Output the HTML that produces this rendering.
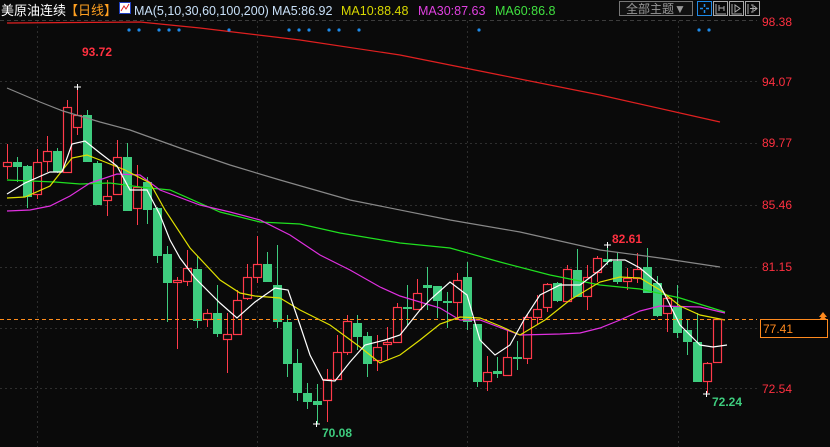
<!DOCTYPE html>
<html><head><meta charset="utf-8"><style>
body{margin:0;background:#0a0a0a;width:830px;height:447px;overflow:hidden;font-family:"Liberation Sans","Noto Sans CJK SC",sans-serif}
svg{position:absolute;left:0;top:0}
</style></head><body>
<svg id="s" width="830" height="447" xmlns="http://www.w3.org/2000/svg">
<g stroke="#2e2e2e" stroke-dasharray="2,3" stroke-width="1">
<line x1="0" y1="20.5" x2="757" y2="20.5" stroke="#3c3c3c" stroke-dasharray="4,3"/>
<line x1="0" y1="81.5" x2="757" y2="81.5"/><line x1="0" y1="143.5" x2="757" y2="143.5"/>
<line x1="0" y1="205.5" x2="757" y2="205.5"/><line x1="0" y1="267.5" x2="757" y2="267.5"/>
<line x1="0" y1="328.5" x2="757" y2="328.5"/><line x1="0" y1="388.5" x2="757" y2="388.5"/>
<line x1="37.5" y1="21" x2="37.5" y2="447"/><line x1="257.5" y1="21" x2="257.5" y2="447"/>
<line x1="467.5" y1="21" x2="467.5" y2="447"/><line x1="678.5" y1="21" x2="678.5" y2="447"/>
</g>
<g id="c"><line x1="7.5" y1="144" x2="7.5" y2="179" stroke="#ff3a4a"/><rect x="3.5" y="162.5" width="8" height="4" fill="#0a0a0a" stroke="#ff3a4a" stroke-width="1.2"/><line x1="17.5" y1="157" x2="17.5" y2="182" stroke="#3ecc7e"/><rect x="13" y="162" width="9" height="5" fill="#3ecc7e"/><line x1="27.5" y1="165" x2="27.5" y2="208" stroke="#3ecc7e"/><rect x="23" y="166" width="9" height="31" fill="#3ecc7e"/><line x1="37.5" y1="149" x2="37.5" y2="199" stroke="#ff3a4a"/><rect x="33.5" y="162.5" width="8" height="32" fill="#0a0a0a" stroke="#ff3a4a" stroke-width="1.2"/><line x1="47.5" y1="136" x2="47.5" y2="172" stroke="#ff3a4a"/><rect x="43.5" y="151.5" width="8" height="10" fill="#0a0a0a" stroke="#ff3a4a" stroke-width="1.2"/><line x1="57.5" y1="148" x2="57.5" y2="173" stroke="#3ecc7e"/><rect x="53" y="151" width="9" height="21" fill="#3ecc7e"/><line x1="67.5" y1="100" x2="67.5" y2="172" stroke="#ff3a4a"/><rect x="63.5" y="107.5" width="8" height="65" fill="#0a0a0a" stroke="#ff3a4a" stroke-width="1.2"/><line x1="77.5" y1="87" x2="77.5" y2="135" stroke="#ff3a4a"/><rect x="73.5" y="115.5" width="8" height="12" fill="#0a0a0a" stroke="#ff3a4a" stroke-width="1.2"/><line x1="87.5" y1="110" x2="87.5" y2="162" stroke="#3ecc7e"/><rect x="83" y="115" width="9" height="47" fill="#3ecc7e"/><line x1="97.5" y1="161" x2="97.5" y2="205" stroke="#3ecc7e"/><rect x="93" y="163" width="9" height="42" fill="#3ecc7e"/><line x1="107.5" y1="180" x2="107.5" y2="216" stroke="#ff3a4a"/><rect x="103.5" y="196.5" width="8" height="4" fill="#0a0a0a" stroke="#ff3a4a" stroke-width="1.2"/><line x1="117.5" y1="140" x2="117.5" y2="194" stroke="#ff3a4a"/><rect x="113.5" y="157.5" width="8" height="37" fill="#0a0a0a" stroke="#ff3a4a" stroke-width="1.2"/><line x1="127.5" y1="143" x2="127.5" y2="210" stroke="#3ecc7e"/><rect x="123" y="157" width="9" height="54" fill="#3ecc7e"/><line x1="137.5" y1="165" x2="137.5" y2="225" stroke="#ff3a4a"/><rect x="133.5" y="187.5" width="8" height="21" fill="#0a0a0a" stroke="#ff3a4a" stroke-width="1.2"/><line x1="147.5" y1="177" x2="147.5" y2="224" stroke="#3ecc7e"/><rect x="143" y="182" width="9" height="28" fill="#3ecc7e"/><line x1="157.5" y1="207" x2="157.5" y2="263" stroke="#3ecc7e"/><rect x="153" y="208" width="9" height="48" fill="#3ecc7e"/><line x1="167.5" y1="246" x2="167.5" y2="322" stroke="#3ecc7e"/><rect x="163" y="254" width="9" height="29" fill="#3ecc7e"/><line x1="177.5" y1="277" x2="177.5" y2="349" stroke="#ff3a4a"/><rect x="173.5" y="280.5" width="8" height="2" fill="#0a0a0a" stroke="#ff3a4a" stroke-width="1.2"/><line x1="187.5" y1="250" x2="187.5" y2="286" stroke="#ff3a4a"/><rect x="183.5" y="268.5" width="8" height="13" fill="#0a0a0a" stroke="#ff3a4a" stroke-width="1.2"/><line x1="197.5" y1="256" x2="197.5" y2="328" stroke="#3ecc7e"/><rect x="193" y="269" width="9" height="52" fill="#3ecc7e"/><line x1="207.5" y1="309" x2="207.5" y2="327" stroke="#ff3a4a"/><rect x="203.5" y="313.5" width="8" height="6" fill="#0a0a0a" stroke="#ff3a4a" stroke-width="1.2"/><line x1="217.5" y1="285" x2="217.5" y2="337" stroke="#3ecc7e"/><rect x="213" y="313" width="9" height="21" fill="#3ecc7e"/><line x1="227.5" y1="313" x2="227.5" y2="373" stroke="#ff3a4a"/><rect x="223.5" y="334.5" width="8" height="5" fill="#0a0a0a" stroke="#ff3a4a" stroke-width="1.2"/><line x1="237.5" y1="290" x2="237.5" y2="335" stroke="#ff3a4a"/><rect x="233.5" y="300.5" width="8" height="34" fill="#0a0a0a" stroke="#ff3a4a" stroke-width="1.2"/><line x1="247.5" y1="264" x2="247.5" y2="300" stroke="#ff3a4a"/><rect x="243.5" y="277.5" width="8" height="21" fill="#0a0a0a" stroke="#ff3a4a" stroke-width="1.2"/><line x1="257.5" y1="236" x2="257.5" y2="283" stroke="#ff3a4a"/><rect x="253.5" y="264.5" width="8" height="13" fill="#0a0a0a" stroke="#ff3a4a" stroke-width="1.2"/><line x1="267.5" y1="252" x2="267.5" y2="282" stroke="#3ecc7e"/><rect x="263" y="264" width="9" height="18" fill="#3ecc7e"/><line x1="277.5" y1="245" x2="277.5" y2="328" stroke="#3ecc7e"/><rect x="273" y="285" width="9" height="37" fill="#3ecc7e"/><line x1="287.5" y1="315" x2="287.5" y2="377" stroke="#3ecc7e"/><rect x="283" y="322" width="9" height="42" fill="#3ecc7e"/><line x1="297.5" y1="349" x2="297.5" y2="401" stroke="#3ecc7e"/><rect x="293" y="363" width="9" height="30" fill="#3ecc7e"/><line x1="307.5" y1="383" x2="307.5" y2="409" stroke="#3ecc7e"/><rect x="303" y="393" width="9" height="9" fill="#3ecc7e"/><line x1="317.5" y1="384" x2="317.5" y2="424" stroke="#3ecc7e"/><rect x="313" y="401" width="9" height="4" fill="#3ecc7e"/><line x1="327.5" y1="369" x2="327.5" y2="422" stroke="#ff3a4a"/><rect x="323.5" y="379.5" width="8" height="21" fill="#0a0a0a" stroke="#ff3a4a" stroke-width="1.2"/><line x1="337.5" y1="335" x2="337.5" y2="379" stroke="#ff3a4a"/><rect x="333.5" y="352.5" width="8" height="27" fill="#0a0a0a" stroke="#ff3a4a" stroke-width="1.2"/><line x1="347.5" y1="315" x2="347.5" y2="355" stroke="#ff3a4a"/><rect x="343.5" y="321.5" width="8" height="31" fill="#0a0a0a" stroke="#ff3a4a" stroke-width="1.2"/><line x1="357.5" y1="315" x2="357.5" y2="350" stroke="#3ecc7e"/><rect x="353" y="323" width="9" height="14" fill="#3ecc7e"/><line x1="367.5" y1="332" x2="367.5" y2="377" stroke="#3ecc7e"/><rect x="363" y="336" width="9" height="28" fill="#3ecc7e"/><line x1="377.5" y1="335" x2="377.5" y2="371" stroke="#ff3a4a"/><rect x="373.5" y="347.5" width="8" height="13" fill="#0a0a0a" stroke="#ff3a4a" stroke-width="1.2"/><line x1="387.5" y1="327" x2="387.5" y2="360" stroke="#ff3a4a"/><rect x="383.5" y="342.5" width="8" height="2" fill="#0a0a0a" stroke="#ff3a4a" stroke-width="1.2"/><line x1="397.5" y1="303" x2="397.5" y2="342" stroke="#ff3a4a"/><rect x="393.5" y="307.5" width="8" height="35" fill="#0a0a0a" stroke="#ff3a4a" stroke-width="1.2"/><line x1="407.5" y1="285" x2="407.5" y2="325" stroke="#3ecc7e"/><rect x="403" y="307" width="9" height="2" fill="#3ecc7e"/><line x1="417.5" y1="279" x2="417.5" y2="310" stroke="#ff3a4a"/><rect x="413.5" y="293.5" width="8" height="16" fill="#0a0a0a" stroke="#ff3a4a" stroke-width="1.2"/><line x1="427.5" y1="267" x2="427.5" y2="310" stroke="#3ecc7e"/><rect x="423" y="285" width="9" height="3" fill="#3ecc7e"/><line x1="437.5" y1="286" x2="437.5" y2="318" stroke="#3ecc7e"/><rect x="433" y="286" width="9" height="15" fill="#3ecc7e"/><line x1="447.5" y1="292" x2="447.5" y2="328" stroke="#3ecc7e"/><rect x="443" y="301" width="9" height="2" fill="#3ecc7e"/><line x1="457.5" y1="273" x2="457.5" y2="320" stroke="#ff3a4a"/><rect x="453.5" y="280.5" width="8" height="22" fill="#0a0a0a" stroke="#ff3a4a" stroke-width="1.2"/><line x1="467.5" y1="262" x2="467.5" y2="330" stroke="#3ecc7e"/><rect x="463" y="277" width="9" height="45" fill="#3ecc7e"/><line x1="477.5" y1="324" x2="477.5" y2="387" stroke="#3ecc7e"/><rect x="473" y="324" width="9" height="58" fill="#3ecc7e"/><line x1="487.5" y1="356" x2="487.5" y2="391" stroke="#ff3a4a"/><rect x="483.5" y="372.5" width="8" height="9" fill="#0a0a0a" stroke="#ff3a4a" stroke-width="1.2"/><line x1="497.5" y1="357" x2="497.5" y2="378" stroke="#3ecc7e"/><rect x="493" y="371" width="9" height="3" fill="#3ecc7e"/><line x1="507.5" y1="330" x2="507.5" y2="375" stroke="#ff3a4a"/><rect x="503.5" y="357.5" width="8" height="18" fill="#0a0a0a" stroke="#ff3a4a" stroke-width="1.2"/><line x1="517.5" y1="341" x2="517.5" y2="370" stroke="#3ecc7e"/><rect x="513" y="357" width="9" height="2" fill="#3ecc7e"/><line x1="527.5" y1="314" x2="527.5" y2="364" stroke="#ff3a4a"/><rect x="523.5" y="317.5" width="8" height="41" fill="#0a0a0a" stroke="#ff3a4a" stroke-width="1.2"/><line x1="537.5" y1="295" x2="537.5" y2="324" stroke="#ff3a4a"/><rect x="533.5" y="309.5" width="8" height="8" fill="#0a0a0a" stroke="#ff3a4a" stroke-width="1.2"/><line x1="547.5" y1="283" x2="547.5" y2="312" stroke="#ff3a4a"/><rect x="543.5" y="284.5" width="8" height="23" fill="#0a0a0a" stroke="#ff3a4a" stroke-width="1.2"/><line x1="557.5" y1="282" x2="557.5" y2="302" stroke="#3ecc7e"/><rect x="553" y="283" width="9" height="18" fill="#3ecc7e"/><line x1="567.5" y1="265" x2="567.5" y2="302" stroke="#ff3a4a"/><rect x="563.5" y="269.5" width="8" height="32" fill="#0a0a0a" stroke="#ff3a4a" stroke-width="1.2"/><line x1="577.5" y1="249" x2="577.5" y2="296" stroke="#3ecc7e"/><rect x="573" y="270" width="9" height="27" fill="#3ecc7e"/><line x1="587.5" y1="265" x2="587.5" y2="310" stroke="#ff3a4a"/><rect x="583.5" y="277.5" width="8" height="19" fill="#0a0a0a" stroke="#ff3a4a" stroke-width="1.2"/><line x1="597.5" y1="256" x2="597.5" y2="282" stroke="#ff3a4a"/><rect x="593.5" y="258.5" width="8" height="14" fill="#0a0a0a" stroke="#ff3a4a" stroke-width="1.2"/><line x1="607.5" y1="245" x2="607.5" y2="265" stroke="#3ecc7e"/><rect x="603" y="259" width="9" height="3" fill="#3ecc7e"/><line x1="617.5" y1="252" x2="617.5" y2="284" stroke="#3ecc7e"/><rect x="613" y="261" width="9" height="21" fill="#3ecc7e"/><line x1="627.5" y1="268" x2="627.5" y2="290" stroke="#ff3a4a"/><rect x="623.5" y="278.5" width="8" height="3" fill="#0a0a0a" stroke="#ff3a4a" stroke-width="1.2"/><line x1="637.5" y1="253" x2="637.5" y2="283" stroke="#ff3a4a"/><rect x="633.5" y="269.5" width="8" height="9" fill="#0a0a0a" stroke="#ff3a4a" stroke-width="1.2"/><line x1="647.5" y1="248" x2="647.5" y2="292" stroke="#3ecc7e"/><rect x="643" y="267" width="9" height="26" fill="#3ecc7e"/><line x1="657.5" y1="276" x2="657.5" y2="317" stroke="#3ecc7e"/><rect x="653" y="283" width="9" height="33" fill="#3ecc7e"/><line x1="667.5" y1="295" x2="667.5" y2="332" stroke="#ff3a4a"/><rect x="663.5" y="298.5" width="8" height="15" fill="#0a0a0a" stroke="#ff3a4a" stroke-width="1.2"/><line x1="677.5" y1="285" x2="677.5" y2="338" stroke="#3ecc7e"/><rect x="673" y="306" width="9" height="27" fill="#3ecc7e"/><line x1="687.5" y1="320" x2="687.5" y2="355" stroke="#3ecc7e"/><rect x="683" y="330" width="9" height="12" fill="#3ecc7e"/><line x1="697.5" y1="313" x2="697.5" y2="381" stroke="#3ecc7e"/><rect x="693" y="342" width="9" height="40" fill="#3ecc7e"/><line x1="707.5" y1="362" x2="707.5" y2="393" stroke="#ff3a4a"/><rect x="703.5" y="363.5" width="8" height="18" fill="#0a0a0a" stroke="#ff3a4a" stroke-width="1.2"/><line x1="717.5" y1="318" x2="717.5" y2="363" stroke="#ff3a4a"/><rect x="713.5" y="319.5" width="8" height="43" fill="#0a0a0a" stroke="#ff3a4a" stroke-width="1.2"/></g>
<g fill="none" stroke-width="1.2">
<polyline stroke="#e02020" points="7,23 140,22 200,28 300,40 400,55 500,75 600,95 720,122"/>
<polyline stroke="#888" points="7,88 40,102 63,111 100,122 130,130 180,148 230,165 280,180 350,200 450,220 520,232 600,250 660,258 720,267"/>
<polyline stroke="#20e020" points="7,180 55,182 80,184 110,183 140,187 170,190 220,212 260,222 300,224 340,233 400,243 450,248 500,262 550,275 600,285 640,289 680,298 725,312"/>
<polyline stroke="#e030e0" points="7,211 30,210 50,206 70,196 90,183 117,174 140,175 160,190 200,205 230,212 260,220 290,235 320,255 350,270 380,287 400,296 440,308 460,320 480,320 520,335 560,334 580,333 600,328 620,320 640,311 660,306 700,307 725,313"/>
<polyline stroke="#e0e000" points="7,198 25,197 50,186 72,158 87,155 105,162 125,170 150,183 165,210 190,248 220,280 240,293 255,296 280,298 300,310 330,325 360,347 380,363 400,355 420,340 440,324 460,317 480,318 500,326 520,335 545,320 570,300 600,282 620,277 640,278 660,290 680,306 700,315 725,320"/>
<polyline stroke="#fff" points="7,194 25,183 50,172 62,172 72,144 85,141 100,153 117,166 130,190 147,190 160,215 170,240 180,258 195,278 220,303 237,318 255,302 275,288 288,290 300,325 310,355 323,380 335,381 350,362 365,345 385,340 400,335 420,310 432,298 450,282 467,295 480,340 495,355 510,345 525,318 540,295 560,285 580,285 600,270 610,260 625,260 640,268 660,285 680,325 700,345 713,347 727,345"/>
</g>
<line x1="0" y1="319.5" x2="757" y2="319.5" stroke="#ff8c1a" stroke-width="1" stroke-dasharray="4,3"/>
<g fill="#1e8ae8">
<circle cx="129" cy="30" r="1.6"/><circle cx="139" cy="30" r="1.6"/><circle cx="159" cy="30" r="1.6"/><circle cx="169" cy="30" r="1.6"/><circle cx="179" cy="30" r="1.6"/><circle cx="229" cy="30" r="1.6"/><circle cx="289" cy="30" r="1.6"/><circle cx="299" cy="30" r="1.6"/><circle cx="309" cy="30" r="1.6"/><circle cx="329" cy="30" r="1.6"/><circle cx="339" cy="30" r="1.6"/><circle cx="359" cy="30" r="1.6"/><circle cx="479" cy="30" r="1.6"/><circle cx="699" cy="30" r="1.6"/><circle cx="709" cy="30" r="1.6"/>
</g>
<g font-size="12" fill="#ff3040">
<text x="762" y="26">98.38</text><text x="762" y="86">94.07</text><text x="762" y="147">89.77</text>
<text x="762" y="209">85.46</text><text x="762" y="271">81.15</text><text x="762" y="393">72.54</text>
</g>
<rect x="760.5" y="319.5" width="67" height="18" fill="#000" stroke="#ff8a1e"/>
<text x="763" y="333" font-size="12" fill="#ff8a1e">77.41</text>
<path d="M819 320 L823 315 L827 320 Z M819 317 L823 312 L827 317 Z" fill="#ff8a1e"/>
<g font-size="12" font-weight="bold">
<text x="82" y="56" fill="#ff3040">93.72</text><text x="612" y="243" fill="#ff3040">82.61</text>
<text x="322" y="437" fill="#3ecc7e">70.08</text><text x="712" y="406" fill="#3ecc7e">72.24</text>
</g>
<g stroke="#fff" stroke-width="1">
<path d="M74 87h7M77.5 84v6M604 245h7M607.5 242v6M313 424h7M316.5 421v6M703 394h7M706.5 391v6"/>
</g>
<g font-size="12.5">
<text x="1" y="15" fill="#fff" font-size="13">美原油连续</text>
<text x="65" y="15" fill="#ffa020" font-size="13">【日线】</text>
<rect x="119.5" y="2.5" width="11" height="11" fill="#fff" stroke="#2040c0"/>
<path d="M121 11l3-5 2 3 3-5" stroke="#e02020" fill="none"/>
<text x="134" y="15" fill="#c8e0f8">MA(5,10,30,60,100,200)</text>
<text x="272" y="15" fill="#c8e0f8">MA5:86.92</text>
<text x="341" y="15" fill="#d8d800">MA10:88.48</text>
<text x="418" y="15" fill="#e040e0">MA30:87.63</text>
<text x="495" y="15" fill="#40e040">MA60:86.8</text>
</g>
<rect x="619.5" y="1.5" width="73" height="14" fill="#111" stroke="#777"/>
<text x="626" y="13" font-size="12" fill="#999">全部主题▼</text>
<g fill="none" stroke="#aaa">
<rect x="697.5" y="1.5" width="14" height="14" stroke="#1e8ae8"/>
<path d="M704.5 4v3M704.5 10v3M700 8.5h3M706 8.5h3" stroke="#1e8ae8" stroke-width="1.5"/>
<rect x="713.5" y="1.5" width="14" height="14"/><path d="M716 4v10h10M719 5v6M719 8h5M724 6v5"/>
<rect x="729.5" y="1.5" width="14" height="14"/><path d="M732 4v10h10M735 5v7l5-3.5z"/>
<rect x="745.5" y="1.5" width="14" height="14"/><path d="M748 4v10M750 8.5h7M754 6l3 2.5-3 2.5M751 5h2v7h-2"/>
</g>
</svg>
</body></html>
